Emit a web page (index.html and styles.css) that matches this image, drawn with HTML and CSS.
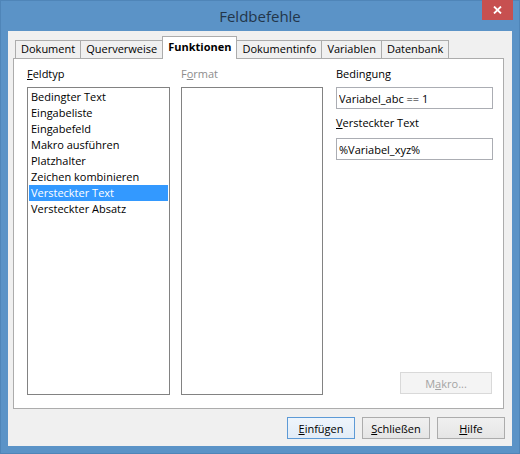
FILE: index.html
```html
<!DOCTYPE html>
<html lang="de">
<head>
    <meta charset="UTF-8">
    <meta name="viewport" content="width=device-width, initial-scale=1.0">
    <title>Feldbefehle</title>
    <link rel="stylesheet" href="styles.css">
</head>
<body>
    <div class="window">
        <div class="titlebar">
            <span></span>
            <span class="title">Feldbefehle</span>
            <button class="close" title="Schließen">
                <svg width="9" height="8" viewBox="0 0 9 8">
                    <path d="M1 0.5 L8 7.5 M8 0.5 L1 7.5" stroke="#fff" stroke-width="1.8" fill="none"/>
                </svg>
            </button>
        </div>

        <div class="client">
            <div class="tabs">
                <div class="tab">Dokument</div>
                <div class="tab">Querverweise</div>
                <div class="tab active">Funktionen</div>
                <div class="tab">Dokumentinfo</div>
                <div class="tab">Variablen</div>
                <div class="tab">Datenbank</div>
            </div>

            <div class="panel">
                <div class="col col-type">
                    <div class="label"><u>F</u>eldtyp</div>
                    <div class="listbox" id="feldtyp"></div>
                </div>
                <div class="col col-format">
                    <div class="label disabled">F<u>o</u>rmat</div>
                    <div class="listbox"></div>
                </div>
                <div class="col col-cond">
                    <div class="label">Bedin<u>g</u>ung</div>
                    <input type="text" class="field" value="Variabel_abc == 1">
                    <div class="label second"><u>V</u>ersteckter Text</div>
                    <input type="text" class="field" value="%Variabel_xyz%">
                    <button class="btn makro" disabled>M<u>a</u>kro...</button>
                </div>
            </div>

            <div class="buttons">
                <button class="btn default"><u>E</u>infügen</button>
                <button class="btn"><u>S</u>chließen</button>
                <button class="btn"><u>H</u>ilfe</button>
            </div>
        </div>
    </div>

    <script>
        const feldtypen = [
            'Bedingter Text',
            'Eingabeliste',
            'Eingabefeld',
            'Makro ausführen',
            'Platzhalter',
            'Zeichen kombinieren',
            'Versteckter Text',
            'Versteckter Absatz'
        ];
        let ausgewaehlt = 6;

        function zeigeFeldtypen() {
            const liste = document.getElementById('feldtyp');
            liste.innerHTML = '';
            feldtypen.forEach((name, i) => {
                const cls = i === ausgewaehlt ? 'item selected' : 'item';
                liste.innerHTML += `<div class="${cls}" data-index="${i}">${name}</div>`;
            });
        }

        document.getElementById('feldtyp').addEventListener('click', e => {
            const item = e.target.closest('.item');
            if (!item) return;
            ausgewaehlt = Number(item.dataset.index);
            zeigeFeldtypen();
        });

        zeigeFeldtypen();
    </script>
</body>
</html>
```

FILE: styles.css
```css
* {
    box-sizing: border-box;
}
body {
    margin: 0;
    font-family: "Open Sans", "Noto Sans", sans-serif;
    font-size: 11px;
    color: #000;
}
.window {
    width: 520px;
    height: 454px;
    background-color: #5b93c7;
    border: 1px solid #4f85b8;
    display: flex;
    flex-direction: column;
}
.titlebar {
    height: 30px;
    display: grid;
    grid-template-columns: 1fr auto 1fr;
    align-items: start;
}
.title {
    font-size: 15px;
    color: #23364a;
    line-height: 30px;
}
.close {
    justify-self: end;
    margin-right: 6px;
    width: 31px;
    height: 20px;
    margin-top: -1px;
    border: none;
    padding: 0;
    background-color: #c75050;
    display: flex;
    align-items: center;
    justify-content: center;
}
.client {
    margin: 0 7px;
    height: 415px;
    background-color: #f0f0f0;
    border: 1px solid #4a7fb2;
    border-width: 0;
    padding: 5px 8px 7px 5px;
    display: flex;
    flex-direction: column;
}
.tabs {
    height: 22px;
    display: flex;
    align-items: flex-end;
    padding-left: 2px;
}
.tab {
    height: 18px;
    line-height: 16px;
    padding: 0 5px;
    border: 1px solid #acacac;
    border-bottom: none;
    margin-right: -1px;
    background-color: #f0f0f0;
    white-space: nowrap;
}
.tab.active {
    height: 23px;
    line-height: 20px;
    margin-bottom: -1px;
    background-color: #fff;
    font-weight: bold;
    position: relative;
    z-index: 1;
}
.panel {
    height: 351px;
    background-color: #fff;
    border: 1px solid #acacac;
    padding: 7px 10px 13px 13px;
    display: flex;
    gap: 11px;
}
.col {
    display: flex;
    flex-direction: column;
}
.col-type {
    width: 143px;
}
.col-format {
    width: 142px;
    margin-right: 2px;
}
.col-cond {
    width: 157px;
}
.label {
    height: 16px;
    line-height: 16px;
    margin-bottom: 5px;
}
.label.second {
    margin-top: 6px;
    margin-bottom: 7px;
}
.disabled {
    color: #8d8d8d;
}
.listbox {
    flex-grow: 1;
    border: 1px solid #828282;
    padding: 1px;
    background-color: #fff;
}
.item {
    height: 16px;
    line-height: 16px;
    padding-left: 2px;
    white-space: nowrap;
    cursor: default;
}
.item.selected {
    background-color: #3399ff;
    color: #fff;
}
.field {
    height: 22px;
    border: 1px solid #abadb3;
    padding: 0 2px;
    font-family: inherit;
    font-size: 11px;
    color: #000;
    outline: none;
}
.btn {
    height: 22px;
    border: 1px solid #acacac;
    background: linear-gradient(#f0f0f0, #e5e5e5);
    font-family: inherit;
    font-size: 11px;
    color: #000;
    padding: 0;
}
.makro {
    width: 92px;
    margin-top: auto;
    margin-bottom: 1px;
    align-self: flex-end;
    margin-right: 1px;
    background: #f4f4f4;
    border-color: #d9d9d9;
    color: #a3a3a3;
}
.buttons {
    margin-top: 8px;
    display: flex;
    justify-content: flex-end;
    gap: 7px;
    margin-right: -1px;
}
.buttons .btn {
    width: 68px;
}
.btn.default {
    border-color: #5d9ad6;
    background: linear-gradient(#eef5fc, #e2ecf7);
}
```
